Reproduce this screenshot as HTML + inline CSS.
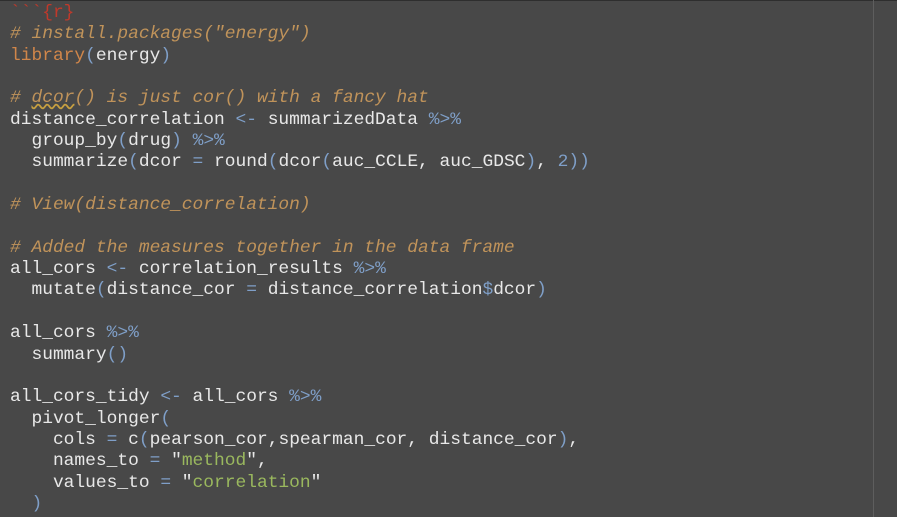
<!DOCTYPE html>
<html><head><style>
html,body{margin:0;padding:0;width:897px;height:517px;overflow:hidden;background:#484848}
.top{position:absolute;left:0;top:0;width:897px;height:1px;background:#2e2e2e;z-index:0}
.vl{position:absolute;left:873px;top:0;width:1px;height:517px;background:#5e5e5e;z-index:0}
.code{position:relative;z-index:2;padding:3px 0 0 10px;margin:0;font-family:"Liberation Mono","DejaVu Sans Mono",monospace;font-size:17.9px;line-height:21.35px;color:#e8e8e8}
.code div{white-space:pre;height:21.35px}
.c{color:#c0935a;font-style:italic}
.o{color:#7f9fc8}
.s{color:#9ab85e}
.k{color:#d0864a}
.r{color:#c0392b}
.u{text-decoration:underline wavy #c8a040}
</style></head><body>
<div class="top"></div><div class="vl"></div>
<div class="code">
<div><span class="r">&#96;&#96;&#96;{r}</span></div>
<div><span class="c"># install.packages("energy")</span></div>
<div><span class="k">library</span><span class="o">(</span>energy<span class="o">)</span></div>
<div> </div>
<div><span class="c"># <span class="u">dcor</span>() is just cor() with a fancy hat</span></div>
<div>distance_correlation <span class="o">&lt;-</span> summarizedData <span class="o">%&gt;%</span></div>
<div>  group_by<span class="o">(</span>drug<span class="o">)</span> <span class="o">%&gt;%</span></div>
<div>  summarize<span class="o">(</span>dcor <span class="o">=</span> round<span class="o">(</span>dcor<span class="o">(</span>auc_CCLE, auc_GDSC<span class="o">)</span>, <span class="o">2))</span></div>
<div> </div>
<div><span class="c"># View(distance_correlation)</span></div>
<div> </div>
<div><span class="c"># Added the measures together in the data frame</span></div>
<div>all_cors <span class="o">&lt;-</span> correlation_results <span class="o">%&gt;%</span></div>
<div>  mutate<span class="o">(</span>distance_cor <span class="o">=</span> distance_correlation<span class="o">&#36;</span>dcor<span class="o">)</span></div>
<div> </div>
<div>all_cors <span class="o">%&gt;%</span></div>
<div>  summary<span class="o">()</span></div>
<div> </div>
<div>all_cors_tidy <span class="o">&lt;-</span> all_cors <span class="o">%&gt;%</span></div>
<div>  pivot_longer<span class="o">(</span></div>
<div>    cols <span class="o">=</span> c<span class="o">(</span>pearson_cor,spearman_cor, distance_cor<span class="o">)</span>,</div>
<div>    names_to <span class="o">=</span> "<span class="s">method</span>",</div>
<div>    values_to <span class="o">=</span> "<span class="s">correlation</span>"</div>
<div>  <span class="o">)</span></div>
</div>
</body></html>
